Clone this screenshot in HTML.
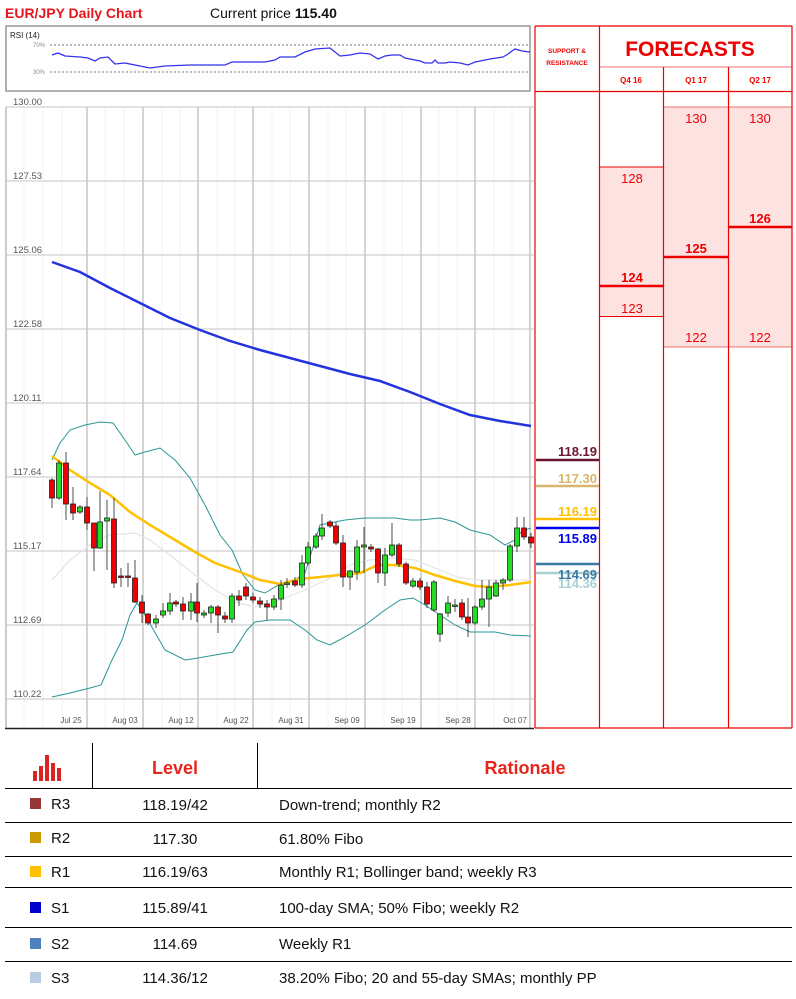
<!DOCTYPE html>
<html><head><meta charset="utf-8"><style>
body{margin:0;width:796px;height:999px;background:#fff;overflow:hidden;font-family:"Liberation Sans",sans-serif;position:relative}
.a{position:absolute}
</style></head><body>
<div class="a" style="left:5px;top:5px;font-size:14px;font-weight:bold;color:#e8141c">EUR/JPY Daily Chart</div>
<div class="a" style="left:210px;top:5px;font-size:14px;color:#111">Current price <b>115.40</b></div>
<svg class="a" style="left:0;top:0" width="796" height="735" xmlns="http://www.w3.org/2000/svg" font-family="Liberation Sans, sans-serif">
<!-- RSI -->
<rect x="6" y="26" width="524" height="65" fill="#fff" stroke="#999" stroke-width="1.5"/>
<text x="10" y="38" font-size="8" fill="#222">RSI (14)</text>
<line x1="50" y1="45" x2="530" y2="45" stroke="#777" stroke-dasharray="2,2"/>
<line x1="50" y1="72" x2="530" y2="72" stroke="#777" stroke-dasharray="2,2"/>
<text x="33" y="47" font-size="6" fill="#888">70%</text>
<text x="33" y="74" font-size="6" fill="#888">30%</text>
<polyline fill="none" stroke="#3333ee" stroke-width="1.3" points="52,55 58,53 65,56 80,57 88,58 95,61 100,58 108,57 115,64 125,63 140,66 150,68 165,66 190,65 210,65 225,65 232,62 250,62 265,62 275,60 280,57 295,57 305,52 315,49 330,48 340,56 350,55 360,53 370,54 378,59 385,56 392,55 400,55 405,58 420,61 425,63 432,63 435,60 438,63 445,63 450,62 460,63 468,65 475,62 490,59 503,57 508,54 512,51 515,49 522,51 530,52"/>
<!-- main grid -->
<g stroke="#f3f3f3" stroke-width="1">
<line x1="24" y1="107" x2="24" y2="728"/><line x1="43" y1="107" x2="43" y2="728"/><line x1="62" y1="107" x2="62" y2="728"/>
<line x1="105" y1="107" x2="105" y2="728"/><line x1="124" y1="107" x2="124" y2="728"/>
<line x1="162" y1="107" x2="162" y2="728"/><line x1="180" y1="107" x2="180" y2="728"/>
<line x1="217" y1="107" x2="217" y2="728"/><line x1="235" y1="107" x2="235" y2="728"/>
<line x1="272" y1="107" x2="272" y2="728"/><line x1="290" y1="107" x2="290" y2="728"/>
<line x1="328" y1="107" x2="328" y2="728"/><line x1="346" y1="107" x2="346" y2="728"/>
<line x1="384" y1="107" x2="384" y2="728"/><line x1="402" y1="107" x2="402" y2="728"/>
<line x1="439" y1="107" x2="439" y2="728"/><line x1="457" y1="107" x2="457" y2="728"/>
<line x1="494" y1="107" x2="494" y2="728"/><line x1="512" y1="107" x2="512" y2="728"/>
</g>
<g stroke="#aaa" stroke-width="1">
<line x1="87" y1="107" x2="87" y2="728"/><line x1="143" y1="107" x2="143" y2="728"/><line x1="198" y1="107" x2="198" y2="728"/><line x1="253" y1="107" x2="253" y2="728"/><line x1="309" y1="107" x2="309" y2="728"/><line x1="365" y1="107" x2="365" y2="728"/><line x1="421" y1="107" x2="421" y2="728"/><line x1="475" y1="107" x2="475" y2="728"/><line x1="530" y1="107" x2="530" y2="728"/>
</g>
<g stroke="#c4c4c4" stroke-width="1">
<line x1="6" y1="107" x2="534" y2="107"/><line x1="6" y1="181" x2="534" y2="181"/><line x1="6" y1="255" x2="534" y2="255"/><line x1="6" y1="329" x2="534" y2="329"/><line x1="6" y1="403" x2="534" y2="403"/><line x1="6" y1="477" x2="534" y2="477"/><line x1="6" y1="551" x2="534" y2="551"/><line x1="6" y1="625" x2="534" y2="625"/><line x1="6" y1="699" x2="534" y2="699"/>
</g>
<line x1="6" y1="107" x2="6" y2="728" stroke="#ccc" stroke-width="2"/>
<line x1="5" y1="728.5" x2="534" y2="728.5" stroke="#222" stroke-width="1.5"/>
<g font-size="9.5" fill="#555">
<text x="13" y="105">130.00</text><text x="13" y="179">127.53</text><text x="13" y="253">125.06</text><text x="13" y="327">122.58</text><text x="13" y="401">120.11</text><text x="13" y="475">117.64</text><text x="13" y="549">115.17</text><text x="13" y="623">112.69</text><text x="13" y="697">110.22</text>
</g>
<g font-size="8" fill="#555" text-anchor="middle">
<text x="71" y="723">Jul 25</text><text x="125" y="723">Aug 03</text><text x="181" y="723">Aug 12</text><text x="236" y="723">Aug 22</text><text x="291" y="723">Aug 31</text><text x="347" y="723">Sep 09</text><text x="403" y="723">Sep 19</text><text x="458" y="723">Sep 28</text><text x="515" y="723">Oct 07</text>
</g>
<!-- lines -->
<polyline fill="none" stroke="#2233dd" stroke-width="2.5" points="52,262 80,272 110,288 140,303 170,318 200,330 230,341 260,350 290,358 320,366 350,374 380,381 410,392 440,404 470,415 500,421 531,426"/>
<polyline fill="none" stroke="#e4e4e4" stroke-width="1.2" points="52,580 70,560 90,545 110,535 135,533 150,540 170,555 195,575 215,590 235,602 255,607 280,600 305,590 330,578 350,565 370,560 395,558 415,560 440,570 460,578 480,580 505,580 531,580"/>
<polyline fill="none" stroke="#2a9595" stroke-width="1" points="52,460 60,443 70,430 85,425 100,422 113,423 125,440 135,455 145,452 160,448 175,460 190,478 205,505 220,535 232,550 243,575 255,590 265,593 280,584 295,580 305,573 320,525 330,523 345,520 365,518 380,518 395,518 410,520 420,520 440,518 455,522 470,530 490,535 505,545 515,540 522,531 531,528"/>
<polyline fill="none" stroke="#2a9595" stroke-width="1" points="52,697 70,693 90,688 101,685 112,660 122,640 130,615 137,603 145,615 165,650 185,660 198,658 215,655 233,652 247,630 255,622 270,620 290,620 305,630 317,640 330,645 345,637 365,625 385,610 400,600 413,598 425,605 440,615 455,625 470,632 495,632 510,635 531,636"/>
<polyline fill="none" stroke="#ffc000" stroke-width="2.5" points="52,456 70,470 90,483 110,495 130,512 150,525 175,540 195,552 215,563 240,572 260,580 280,584 300,579 320,577 340,575 360,573 378,565 395,565 415,568 435,575 455,581 475,586 490,587 510,585 531,582"/>
<!-- candles -->
<g stroke="#222" stroke-width="0.8">
<line x1="52" y1="478" x2="52" y2="508"/><rect x="49.5" y="480" width="5" height="18" fill="#e00"/>
<line x1="59" y1="460" x2="59" y2="500"/><rect x="56.5" y="463" width="5" height="35" fill="#2d2"/>
<line x1="66" y1="452" x2="66" y2="520"/><rect x="63.5" y="463" width="5" height="41" fill="#e00"/>
<line x1="73" y1="487" x2="73" y2="520"/><rect x="70.5" y="504" width="5" height="9" fill="#e00"/>
<line x1="80" y1="505" x2="80" y2="514"/><rect x="77.5" y="507" width="5" height="5" fill="#2d2"/>
<line x1="87" y1="497" x2="87" y2="530"/><rect x="84.5" y="507" width="5" height="16" fill="#e00"/>
<line x1="94" y1="523" x2="94" y2="571"/><rect x="91.5" y="523" width="5" height="25" fill="#e00"/>
<line x1="100" y1="491" x2="100" y2="549"/><rect x="97.5" y="522" width="5" height="26" fill="#2d2"/>
<line x1="107" y1="500" x2="107" y2="570"/><rect x="104.5" y="518" width="5" height="3" fill="#2d2"/>
<line x1="114" y1="498" x2="114" y2="588"/><rect x="111.5" y="519" width="5" height="64" fill="#e00"/>
<line x1="121" y1="568" x2="121" y2="587"/><rect x="118.5" y="576" width="5" height="1.5" fill="#e00"/>
<line x1="128" y1="563" x2="128" y2="587"/><rect x="125.5" y="576" width="5" height="1.5" fill="#e00"/>
<line x1="135" y1="560" x2="135" y2="603"/><rect x="132.5" y="578" width="5" height="24" fill="#e00"/>
<line x1="142" y1="595" x2="142" y2="623"/><rect x="139.5" y="602" width="5" height="11" fill="#e00"/>
<line x1="148" y1="613" x2="148" y2="625"/><rect x="145.5" y="614" width="5" height="9" fill="#e00"/>
<line x1="156" y1="615" x2="156" y2="628"/><rect x="153.5" y="619" width="5" height="4" fill="#2d2"/>
<line x1="163" y1="603" x2="163" y2="618"/><rect x="160.5" y="611" width="5" height="4" fill="#2d2"/>
<line x1="170" y1="593" x2="170" y2="615"/><rect x="167.5" y="603" width="5" height="8" fill="#2d2"/>
<line x1="176" y1="600" x2="176" y2="607"/><rect x="173.5" y="602" width="5" height="2" fill="#e00"/>
<line x1="183" y1="597" x2="183" y2="620"/><rect x="180.5" y="604" width="5" height="7" fill="#e00"/>
<line x1="191" y1="593" x2="191" y2="620"/><rect x="188.5" y="602" width="5" height="9" fill="#2d2"/>
<line x1="197" y1="583" x2="197" y2="622"/><rect x="194.5" y="602" width="5" height="11" fill="#e00"/>
<line x1="204" y1="610" x2="204" y2="618"/><rect x="201.5" y="613" width="5" height="2" fill="#2d2"/>
<line x1="211" y1="605" x2="211" y2="623"/><rect x="208.5" y="607" width="5" height="6" fill="#2d2"/>
<line x1="218" y1="605" x2="218" y2="633"/><rect x="215.5" y="607" width="5" height="8" fill="#e00"/>
<line x1="225" y1="612" x2="225" y2="623"/><rect x="222.5" y="616" width="5" height="3" fill="#e00"/>
<line x1="232" y1="593" x2="232" y2="623"/><rect x="229.5" y="596" width="5" height="23" fill="#2d2"/>
<line x1="239" y1="590" x2="239" y2="606"/><rect x="236.5" y="596" width="5" height="4" fill="#e00"/>
<line x1="246" y1="583" x2="246" y2="600"/><rect x="243.5" y="587" width="5" height="9" fill="#e00"/>
<line x1="253" y1="593" x2="253" y2="603"/><rect x="250.5" y="597" width="5" height="3" fill="#e00"/>
<line x1="260" y1="597" x2="260" y2="608"/><rect x="257.5" y="601" width="5" height="3" fill="#e00"/>
<line x1="267" y1="600" x2="267" y2="620"/><rect x="264.5" y="604" width="5" height="3" fill="#e00"/>
<line x1="274" y1="595" x2="274" y2="610"/><rect x="271.5" y="599" width="5" height="8" fill="#2d2"/>
<line x1="281" y1="580" x2="281" y2="610"/><rect x="278.5" y="585" width="5" height="14" fill="#2d2"/>
<line x1="287" y1="578" x2="287" y2="588"/><rect x="284.5" y="583" width="5" height="1.5" fill="#2d2"/>
<line x1="295" y1="577" x2="295" y2="587"/><rect x="292.5" y="581" width="5" height="4" fill="#e00"/>
<line x1="302" y1="555" x2="302" y2="588"/><rect x="299.5" y="563" width="5" height="22" fill="#2d2"/>
<line x1="308" y1="542" x2="308" y2="565"/><rect x="305.5" y="547" width="5" height="16" fill="#2d2"/>
<line x1="316" y1="533" x2="316" y2="549"/><rect x="313.5" y="536" width="5" height="11" fill="#2d2"/>
<line x1="322" y1="514" x2="322" y2="540"/><rect x="319.5" y="528" width="5" height="8" fill="#2d2"/>
<line x1="330" y1="520" x2="330" y2="528"/><rect x="327.5" y="522" width="5" height="4" fill="#e00"/>
<line x1="336" y1="522" x2="336" y2="545"/><rect x="333.5" y="526" width="5" height="17" fill="#e00"/>
<line x1="343" y1="535" x2="343" y2="587"/><rect x="340.5" y="543" width="5" height="34" fill="#e00"/>
<line x1="350" y1="570" x2="350" y2="590"/><rect x="347.5" y="571" width="5" height="6" fill="#2d2"/>
<line x1="357" y1="540" x2="357" y2="580"/><rect x="354.5" y="547" width="5" height="25" fill="#2d2"/>
<line x1="364" y1="527" x2="364" y2="573"/><rect x="361.5" y="545" width="5" height="2" fill="#2d2"/>
<line x1="371" y1="544" x2="371" y2="552"/><rect x="368.5" y="547" width="5" height="2" fill="#e00"/>
<line x1="378" y1="548" x2="378" y2="583"/><rect x="375.5" y="549" width="5" height="24" fill="#e00"/>
<line x1="385" y1="548" x2="385" y2="586"/><rect x="382.5" y="555" width="5" height="18" fill="#2d2"/>
<line x1="392" y1="523" x2="392" y2="557"/><rect x="389.5" y="545" width="5" height="10" fill="#2d2"/>
<line x1="399" y1="543" x2="399" y2="567"/><rect x="396.5" y="545" width="5" height="19" fill="#e00"/>
<line x1="406" y1="562" x2="406" y2="585"/><rect x="403.5" y="564" width="5" height="19" fill="#e00"/>
<line x1="413" y1="578" x2="413" y2="588"/><rect x="410.5" y="581" width="5" height="5" fill="#2d2"/>
<line x1="420" y1="578" x2="420" y2="590"/><rect x="417.5" y="581" width="5" height="6" fill="#e00"/>
<line x1="427" y1="582" x2="427" y2="608"/><rect x="424.5" y="587" width="5" height="17" fill="#e00"/>
<line x1="434" y1="580" x2="434" y2="612"/><rect x="431.5" y="582" width="5" height="28" fill="#2d2"/>
<line x1="440" y1="613" x2="440" y2="642"/><rect x="437.5" y="614" width="5" height="20" fill="#2d2"/>
<line x1="448" y1="596" x2="448" y2="617"/><rect x="445.5" y="603" width="5" height="10" fill="#2d2"/>
<line x1="455" y1="599" x2="455" y2="612"/><rect x="452.5" y="605" width="5" height="1.5" fill="#2d2"/>
<line x1="462" y1="599" x2="462" y2="620"/><rect x="459.5" y="603" width="5" height="14" fill="#e00"/>
<line x1="468" y1="598" x2="468" y2="637"/><rect x="465.5" y="617" width="5" height="6" fill="#e00"/>
<line x1="475" y1="605" x2="475" y2="625"/><rect x="472.5" y="607" width="5" height="16" fill="#2d2"/>
<line x1="482" y1="580" x2="482" y2="610"/><rect x="479.5" y="599" width="5" height="8" fill="#2d2"/>
<line x1="489" y1="580" x2="489" y2="627"/><rect x="486.5" y="587" width="5" height="12" fill="#2d2"/>
<line x1="496" y1="580" x2="496" y2="597"/><rect x="493.5" y="583" width="5" height="13" fill="#2d2"/>
<line x1="503" y1="578" x2="503" y2="590"/><rect x="500.5" y="580" width="5" height="3" fill="#2d2"/>
<line x1="510" y1="544" x2="510" y2="582"/><rect x="507.5" y="546" width="5" height="34" fill="#2d2"/>
<line x1="517" y1="517" x2="517" y2="552"/><rect x="514.5" y="528" width="5" height="18" fill="#2d2"/>
<line x1="524" y1="517" x2="524" y2="540"/><rect x="521.5" y="528" width="5" height="9" fill="#e00"/>
<line x1="531" y1="533" x2="531" y2="548"/><rect x="528.5" y="537" width="5" height="6" fill="#e00"/>
</g>
<!-- right panel -->
<rect x="599" y="167" width="64" height="150" fill="#fde2e2"/>
<rect x="664" y="107" width="64" height="240" fill="#fde2e2"/>
<rect x="729" y="107" width="63" height="240" fill="#fde2e2"/>
<g stroke="#f07070" stroke-width="1">
<line x1="599" y1="167" x2="663" y2="167" stroke="#e00"/><line x1="599" y1="316.5" x2="663" y2="316.5" stroke="#e00"/>
<line x1="664" y1="107" x2="792" y2="107"/><line x1="664" y1="347" x2="792" y2="347"/>
<line x1="599" y1="67" x2="792" y2="67"/>
</g>
<g stroke="#e00" stroke-width="2.5">
<line x1="599" y1="286" x2="663" y2="286"/><line x1="664" y1="257" x2="728" y2="257"/><line x1="729" y1="227" x2="792" y2="227"/>
</g>
<g stroke="#e00" stroke-width="1.2">
<line x1="535" y1="26" x2="535" y2="728"/><line x1="599.5" y1="26" x2="599.5" y2="728"/><line x1="663.5" y1="67" x2="663.5" y2="728"/><line x1="728.5" y1="67" x2="728.5" y2="728"/><line x1="792" y1="26" x2="792" y2="728"/>
<line x1="535" y1="26" x2="792" y2="26"/><line x1="535" y1="91.5" x2="792" y2="91.5"/><line x1="535" y1="728" x2="792" y2="728"/>
</g>
<text x="567" y="53" font-size="6.5" font-weight="bold" fill="#e00" text-anchor="middle">SUPPORT &amp;</text>
<text x="567" y="65" font-size="6.5" font-weight="bold" fill="#e00" text-anchor="middle">RESISTANCE</text>
<text x="690" y="56" font-size="21" font-weight="bold" fill="#e00" text-anchor="middle">FORECASTS</text>
<g font-size="8" font-weight="bold" fill="#e00" text-anchor="middle"><text x="631" y="83">Q4 16</text><text x="696" y="83">Q1 17</text><text x="760" y="83">Q2 17</text></g>
<g font-size="13" fill="#e00" text-anchor="middle">
<text x="632" y="183">128</text><text x="632" y="313">123</text>
<text x="696" y="123">130</text><text x="760" y="123">130</text>
<text x="696" y="342">122</text><text x="760" y="342">122</text>
<g font-weight="bold"><text x="632" y="282">124</text><text x="696" y="253">125</text><text x="760" y="223">126</text></g>
</g>
<!-- S/R lines -->
<g stroke-width="2.5">
<line x1="536" y1="460" x2="599" y2="460" stroke="#6b1530"/>
<line x1="536" y1="486" x2="599" y2="486" stroke="#d9b46c"/>
<line x1="536" y1="519" x2="599" y2="519" stroke="#ffc000"/>
<line x1="536" y1="528" x2="599" y2="528" stroke="#0000ee"/>
<line x1="536" y1="564" x2="599" y2="564" stroke="#3a7aa3"/>
<line x1="536" y1="573" x2="599" y2="573" stroke="#a9d0d3"/>
</g>
<g font-size="13" font-weight="bold" text-anchor="end">
<text x="597" y="456" fill="#6b1530">118.19</text>
<text x="597" y="483" fill="#d9b46c">117.30</text>
<text x="597" y="516" fill="#ffc000">116.19</text>
<text x="597" y="543" fill="#0000ee">115.89</text>
<text x="597" y="588" fill="#a9d0d3">114.36</text>
<text x="597" y="579" fill="#3a7aa3">114.69</text>
</g>
</svg>
<!-- table -->
<svg class="a" style="left:0;top:735px" width="796" height="264" xmlns="http://www.w3.org/2000/svg" font-family="Liberation Sans, sans-serif">
<line x1="92.5" y1="8" x2="92.5" y2="53" stroke="#000"/>
<line x1="257.5" y1="8" x2="257.5" y2="53" stroke="#000"/>
<g stroke="#000" stroke-width="1">
<line x1="5" y1="53.5" x2="792" y2="53.5"/><line x1="5" y1="87.5" x2="792" y2="87.5"/><line x1="5" y1="121.5" x2="792" y2="121.5"/><line x1="5" y1="152.5" x2="792" y2="152.5"/><line x1="5" y1="192.5" x2="792" y2="192.5"/><line x1="5" y1="226.5" x2="792" y2="226.5"/>
</g>
<g fill="#dd2222"><rect x="33" y="36" width="4" height="10"/><rect x="39" y="31" width="4" height="15"/><rect x="45" y="20" width="4" height="26"/><rect x="51" y="28" width="4" height="18"/><rect x="57" y="33" width="4" height="13"/></g>
<text x="175" y="39" font-size="18" font-weight="bold" fill="#e8251c" text-anchor="middle">Level</text>
<text x="525" y="39" font-size="18" font-weight="bold" fill="#e8251c" text-anchor="middle">Rationale</text>
<g font-size="15" fill="#111">
<rect x="30" y="63" width="11" height="11" fill="#953735"/><text x="51" y="74">R3</text><text x="175" y="75" text-anchor="middle">118.19/42</text><text x="279" y="75">Down-trend; monthly R2</text>
<rect x="30" y="97" width="11" height="11" fill="#cc9900"/><text x="51" y="108">R2</text><text x="175" y="109" text-anchor="middle">117.30</text><text x="279" y="109">61.80% Fibo</text>
<rect x="30" y="131" width="11" height="11" fill="#ffc000"/><text x="51" y="142">R1</text><text x="175" y="142" text-anchor="middle">116.19/63</text><text x="279" y="142">Monthly R1; Bollinger band; weekly R3</text>
<rect x="30" y="167" width="11" height="11" fill="#0000cc"/><text x="51" y="178">S1</text><text x="175" y="178" text-anchor="middle">115.89/41</text><text x="279" y="178">100-day SMA; 50% Fibo; weekly R2</text>
<rect x="30" y="203" width="11" height="11" fill="#4f81bd"/><text x="51" y="214">S2</text><text x="175" y="214" text-anchor="middle">114.69</text><text x="279" y="214">Weekly R1</text>
<rect x="30" y="237" width="11" height="11" fill="#b8cce4"/><text x="51" y="248">S3</text><text x="175" y="248" text-anchor="middle">114.36/12</text><text x="279" y="248">38.20% Fibo; 20 and 55-day SMAs; monthly PP</text>
</g>
</svg>
</body></html>
